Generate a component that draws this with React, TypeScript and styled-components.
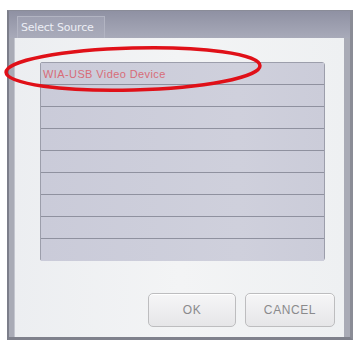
import React from "react";
import styled, { createGlobalStyle } from "styled-components";

const Global = createGlobalStyle`
  html, body { margin: 0; padding: 0; background: #ffffff; }
  body { font-family: "DejaVu Sans", "Liberation Sans", sans-serif; }
`;

const Page = styled.div`
  width: 353px;
  height: 345px;
  padding: 10px 0 0 7px;
  box-sizing: border-box;
  position: relative;
  overflow: hidden;
`;

const Window = styled.div`
  width: 346px;
  height: 330px;
  box-sizing: border-box;
  border-left: 2px solid #7c7e8a;
  border-top: 1px solid #8a8c98;
  border-right: 3px solid #8a8c96;
  border-bottom: 3px solid #7f818c;
  background: #a9abb6;
  display: flex;
  flex-direction: column;
`;

const TitleBar = styled.div`
  height: 27px;
  flex: none;
  background: linear-gradient(#8f91a3, #a8aab9);
  display: flex;
  align-items: flex-end;
  padding-left: 8px;
`;

const Tab = styled.div`
  width: 88px;
  height: 22px;
  box-sizing: border-box;
  border: 1px solid #b2b4c2;
  border-bottom: none;
  background: linear-gradient(#9ea0b1, #a9abba);
  color: #eceef5;
  font-size: 11px;
  letter-spacing: -0.2px;
  display: flex;
  align-items: center;
  padding-left: 3px;
`;

const Body = styled.div`
  flex: 1;
  margin-left: 5px;
  margin-right: 6px;
  background: linear-gradient(90deg, #eceef1, #f3f4f5 50%, #eef0f2);
  border-left: 1px solid #c4c6cf;
  padding: 24px 19px 10px 25px;
  display: flex;
  flex-direction: column;
`;

const List = styled.div`
  height: 199px;
  box-sizing: border-box;
  border: 1px solid #9c9eab;
  border-radius: 2px 3px 3px 2px;
  background: #c9cad8;
  display: flex;
  flex-direction: column;
`;

const Row = styled.div<{ $last?: boolean }>`
  height: 22px;
  flex: none;
  box-sizing: border-box;
  border-bottom: ${(p) => (p.$last ? "none" : "1px solid #8f919f")};
  box-shadow: ${(p) => (p.$last ? "none" : "0 1px 0 #d6d7e2")};
  background: linear-gradient(90deg, #cacbd9, #cfd0dc 70%, #cbccd9);
  color: #d86c78;
  font-family: "Liberation Sans", sans-serif;
  font-size: 11px;
  letter-spacing: 0.4px;
  display: flex;
  align-items: center;
  padding-left: 2px;
`;

const Buttons = styled.div`
  margin-top: auto;
  margin-right: -10px;
  display: flex;
  justify-content: flex-end;
  gap: 9px;
`;

const Button = styled.div<{ $w: number }>`
  width: ${(p) => p.$w}px;
  height: 34px;
  box-sizing: border-box;
  border: 1px solid #bdbdbf;
  border-radius: 5px;
  background: linear-gradient(#f6f6f7, #e6e6e8);
  box-shadow: inset 0 1px 0 #ffffff;
  color: #8a8a8c;
  font-family: "Liberation Sans", sans-serif;
  font-size: 12px;
  letter-spacing: 0.6px;
  display: flex;
  align-items: center;
  justify-content: center;
`;

const Ellipse = styled.svg`
  position: absolute;
  left: 0;
  top: 40px;
  pointer-events: none;
`;

export default function App() {
  const rows = Array.from({ length: 9 });
  return (
    <>
      <Global />
      <Page>
        <Window>
          <TitleBar>
            <Tab>Select Source</Tab>
          </TitleBar>
          <Body>
            <List>
              {rows.map((_, i) => (
                <Row key={i} $last={i === rows.length - 1}>
                  {i === 0 ? "WIA-USB Video Device" : ""}
                </Row>
              ))}
            </List>
            <Buttons>
              <Button $w={88}>OK</Button>
              <Button $w={90}>CANCEL</Button>
            </Buttons>
          </Body>
        </Window>
        <Ellipse width="280" height="60" viewBox="0 0 280 60">
          <ellipse
            cx="133"
            cy="29"
            rx="127"
            ry="21"
            fill="none"
            stroke="#e01018"
            strokeWidth="3.5"
            transform="rotate(-1.5 133 29)"
          />
        </Ellipse>
      </Page>
    </>
  );
}
